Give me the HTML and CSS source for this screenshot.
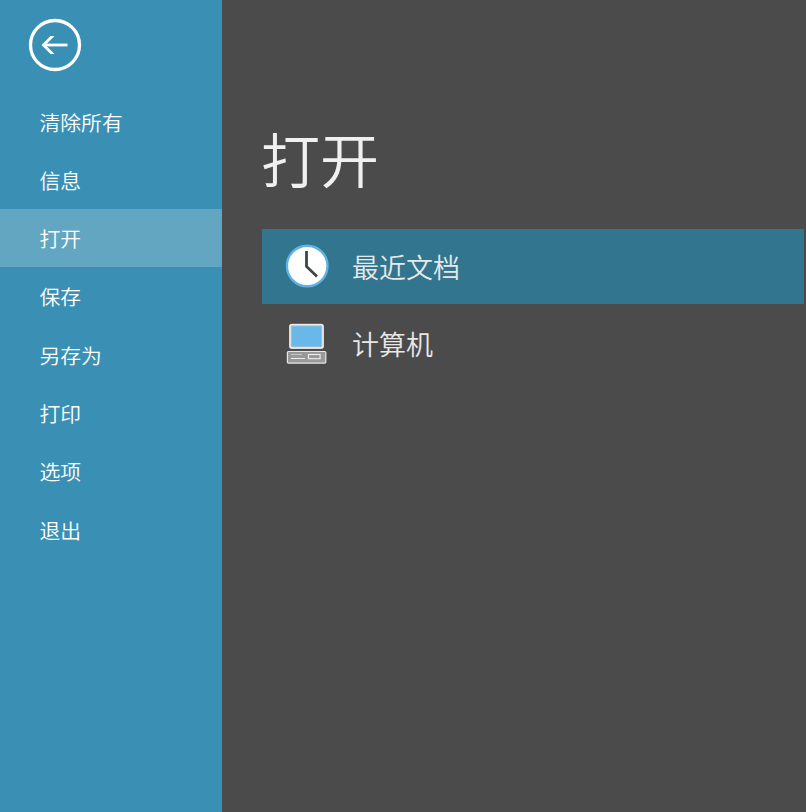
FILE: index.html
```
<!DOCTYPE html>
<html lang="zh-CN">
<head>
    <meta charset="UTF-8">
    <meta name="viewport" content="width=device-width, initial-scale=1.0">
    <title>打开</title>
    <link rel="stylesheet" href="styles.css">
</head>
<body>
    <div class="sidebar">
        <button class="back" aria-label="返回">
            <svg width="54" height="54" viewBox="0 0 54 54" fill="none" stroke="#fff">
                <circle cx="27" cy="27" r="24.5" stroke-width="3.3"/>
                <path d="M39.5 27H16" stroke-width="2.8"/>
                <path d="M22.5 18H26.5L17.5 27L26.5 36H22.5L13.5 27Z" fill="#fff" stroke="none"/>
            </svg>
        </button>
        <ul class="menu">
            <li>清除所有</li>
            <li>信息</li>
            <li class="active">打开</li>
            <li>保存</li>
            <li>另存为</li>
            <li>打印</li>
            <li>选项</li>
            <li>退出</li>
        </ul>
    </div>

    <div class="content">
        <h1>打开</h1>
        <div class="place selected">
            <svg width="44" height="44" viewBox="0 0 44 44">
                <circle cx="22.2" cy="22" r="20.3" fill="#fff" stroke="#60b2e4" stroke-width="2.4"/>
                <path d="M21.5 7V22.5L32 32.5" fill="none" stroke="#3f4648" stroke-width="2.8"/>
            </svg>
            <span>最近文档</span>
        </div>
        <div class="place">
            <svg width="44" height="44" viewBox="0 0 44 44">
                <rect x="5.4" y="4" width="32.2" height="22.6" rx="1.5" fill="#68b8ea" stroke="#c4c2c0" stroke-width="2.4"/>
                <rect x="5" y="3.6" width="33" height="23.4" rx="1.8" fill="none" stroke="#eee" stroke-width="1.4"/>
                <rect x="2.4" y="30.5" width="38.4" height="11.6" rx="1" fill="#999" stroke="#e6e6e6" stroke-width="1.2"/>
                <path d="M6 33.5H17" stroke="#c8c8c8" stroke-width="1"/>
                <path d="M6 37.5H20" stroke="#eee" stroke-width="1"/>
                <rect x="23.5" y="33.5" width="11.6" height="4.2" fill="none" stroke="#eee" stroke-width="1.1"/>
            </svg>
            <span>计算机</span>
        </div>
    </div>
</body>
</html>
```
FILE: styles.css
```
* {
    box-sizing: border-box;
}
body {
    margin: 0;
    display: flex;
    height: 100vh;
    overflow: hidden;
    background-color: #4b4b4b;
    color: #f0f0f0;
    font-family: "Noto Sans CJK SC", sans-serif;
}
.sidebar {
    width: 222px;
    flex-shrink: 0;
    background: #3a90b4;
    color: #fff;
}
.back {
    display: block;
    margin: 18px 0 0 28px;
    padding: 0;
    width: 54px;
    height: 54px;
    background: none;
    border: none;
    cursor: pointer;
}
.back svg {
    display: block;
}
.menu {
    list-style: none;
    margin: 20.5px 0 0;
    padding: 0;
}
.menu li {
    height: 58.33px;
    line-height: 58.5px;
    padding-left: 39.5px;
    font-size: 20.8px;
    font-weight: 350;
    cursor: pointer;
}
.menu .active {
    background: #63a6c2;
}
.content {
    flex: 1;
    padding: 110px 2px 0 39px;
}
h1 {
    margin: 0 0 23px;
    height: 96px;
    line-height: 96px;
    font-size: 59px;
    font-weight: 350;
}
.place {
    display: flex;
    align-items: center;
    height: 75px;
    margin: 0 0 2px 1px;
    padding-left: 23px;
    gap: 23px;
    font-size: 27px;
    font-weight: 350;
    color: #e8e8e8;
    cursor: pointer;
}
.place svg {
    margin-bottom: 2px;
}
.selected {
    background: #31758f;
}
```
